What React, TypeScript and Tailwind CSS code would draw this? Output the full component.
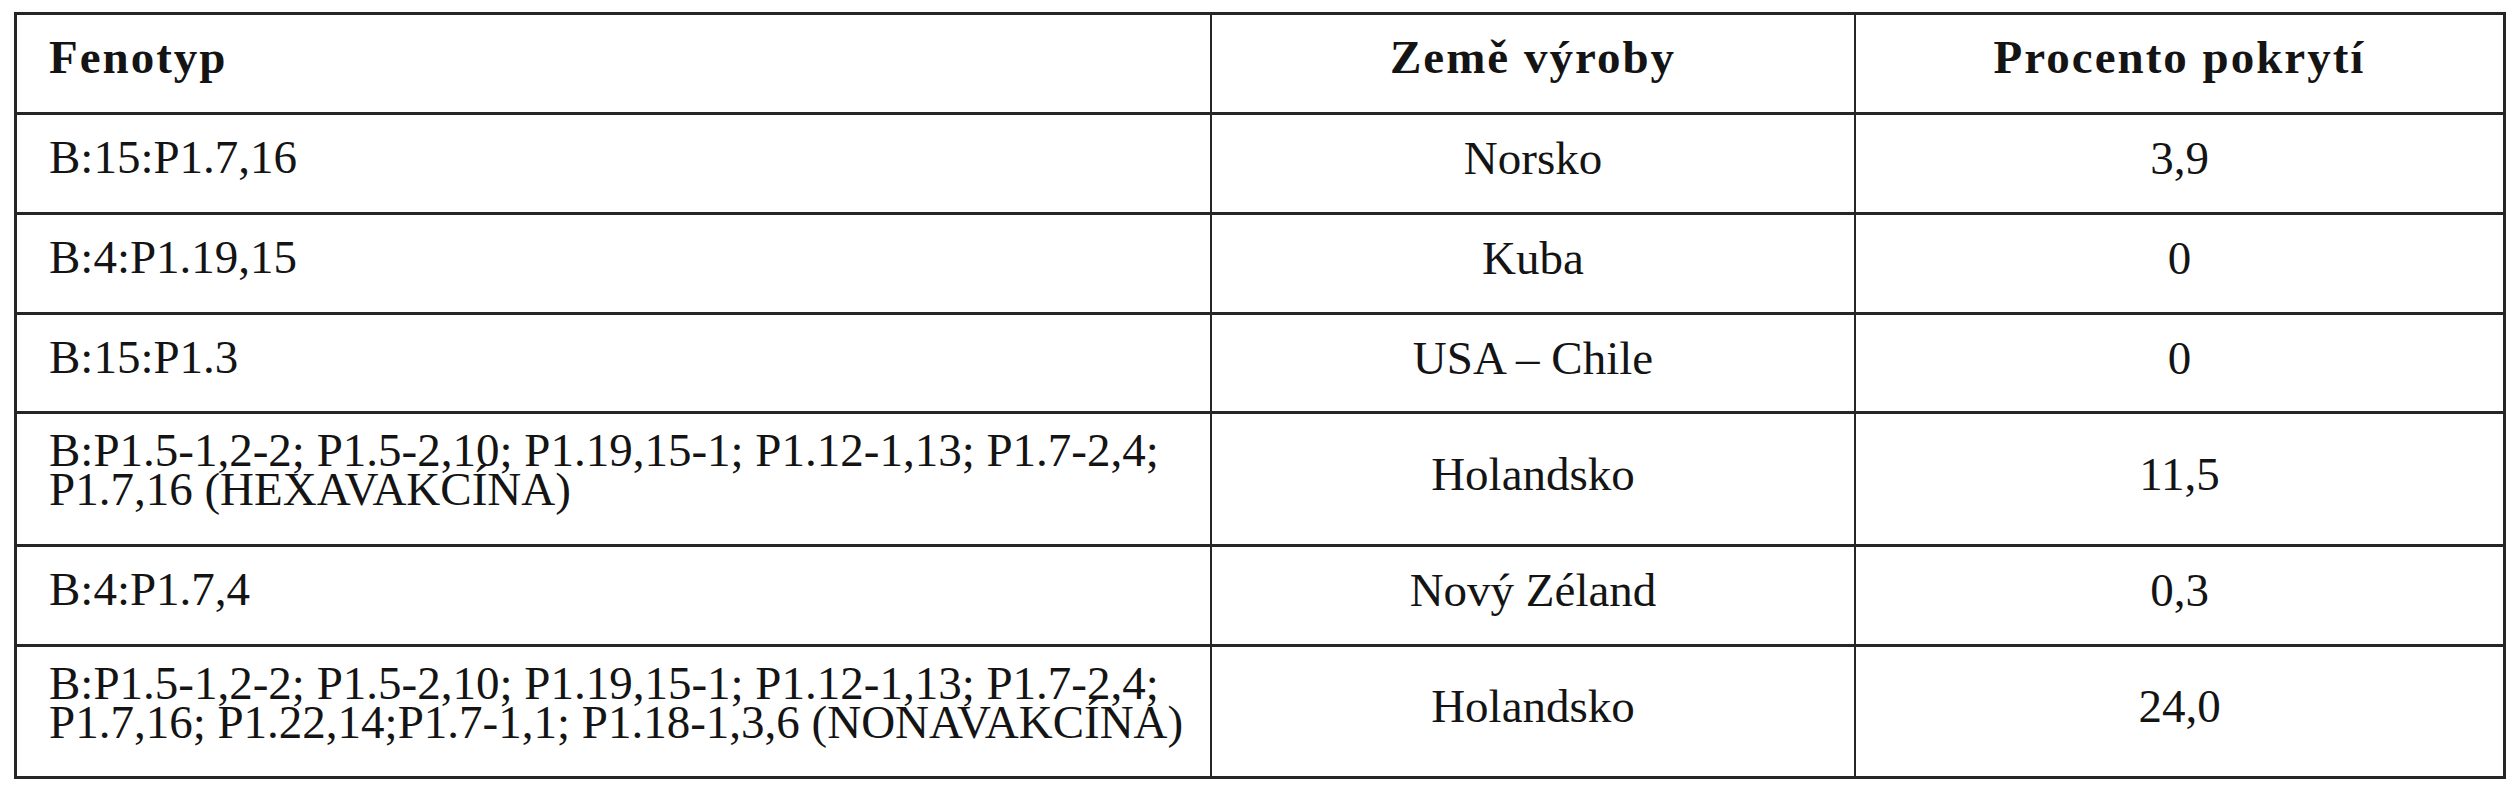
const rows = [
  { fenotyp: ['B:15:P1.7,16'], zeme: 'Norsko', procento: '3,9', h: 'h-[100px]' },
  { fenotyp: ['B:4:P1.19,15'], zeme: 'Kuba', procento: '0', h: 'h-[100px]' },
  { fenotyp: ['B:15:P1.3'], zeme: 'USA – Chile', procento: '0', h: 'h-[99px]' },
  {
    fenotyp: ['B:P1.5-1,2-2; P1.5-2,10; P1.19,15-1; P1.12-1,13; P1.7-2,4;', 'P1.7,16 (HEXAVAKCÍNA)'],
    zeme: 'Holandsko',
    procento: '11,5',
    h: 'h-[133px]',
  },
  { fenotyp: ['B:4:P1.7,4'], zeme: 'Nový Zéland', procento: '0,3', h: 'h-[100px]' },
  {
    fenotyp: [
      'B:P1.5-1,2-2; P1.5-2,10; P1.19,15-1; P1.12-1,13; P1.7-2,4;',
      'P1.7,16; P1.22,14;P1.7-1,1; P1.18-1,3,6 (NONAVAKCÍNA)',
    ],
    zeme: 'Holandsko',
    procento: '24,0',
    h: 'h-[132px]',
  },
]

export default function App() {
  return (
    <div className="min-h-[800px] bg-white pt-[12px] pl-[14px] font-['Liberation_Serif','Times_New_Roman',serif] text-[47px] leading-[39px] text-[#141414]">
      <div className="w-[2492px] border-x-[3px] border-t-[3px] border-[#262626]">
        {/* header */}
        <div className="flex h-[100px] border-b-[3px] border-[#262626] font-bold tracking-[2px]">
          <div className="flex w-[1193px] items-center pb-[12px] pl-[32px]">Fenotyp</div>
          <div className="flex w-[644px] items-center justify-center border-l-2 border-[#262626] pb-[12px]">
            Země výroby
          </div>
          <div className="flex flex-1 items-center justify-center border-l-2 border-[#262626] pb-[12px]">
            Procento pokrytí
          </div>
        </div>

        {rows.map((r, i) => (
          <div key={i} className={`flex ${r.h} border-b-[3px] border-[#262626]`}>
            <div
              className={`flex w-[1193px] items-center whitespace-nowrap pl-[32px] ${
                r.fenotyp.length > 1 ? 'pb-[18px]' : 'pb-[12px]'
              }`}
            >
              <div>
                {r.fenotyp.map(line => (
                  <div key={line}>{line}</div>
                ))}
              </div>
            </div>
            <div className="flex w-[644px] items-center justify-center border-l-2 border-[#262626] pb-[10px]">
              {r.zeme}
            </div>
            <div className="flex flex-1 items-center justify-center border-l-2 border-[#262626] pb-[10px]">
              {r.procento}
            </div>
          </div>
        ))}
      </div>
    </div>
  )
}
